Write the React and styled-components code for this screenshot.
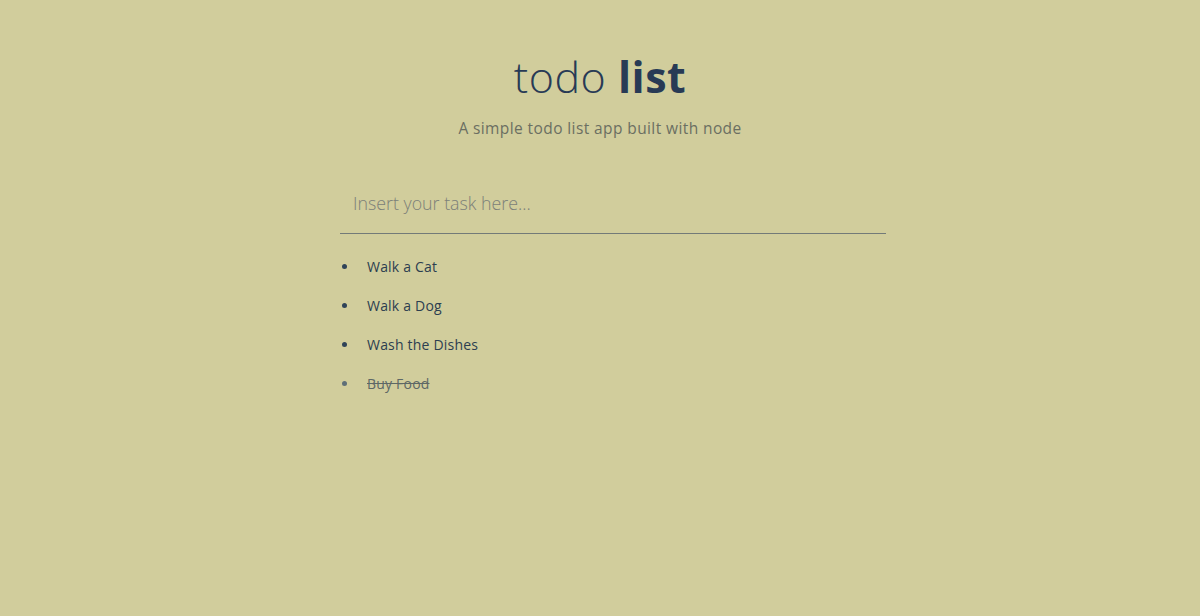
import React, { useState } from "react";
import styled, { createGlobalStyle } from "styled-components";

const GlobalStyle = createGlobalStyle`
  html, body {
    margin: 0;
    padding: 0;
    background: #d1cd9c;
  }
  body {
    font-family: "Open Sans", "Liberation Sans", sans-serif;
    color: #2c3e50;
  }
`;

const Page = styled.div`
  min-height: 616px;
  display: flex;
  flex-direction: column;
  align-items: center;
  padding-top: 51px;
  box-sizing: border-box;
`;

const Title = styled.h1`
  margin: 0;
  font-size: 43px;
  font-weight: 300;
  line-height: 52px;
  color: #283a55;
  letter-spacing: 0.5px;

  strong {
    font-weight: 700;
  }
`;

const Subtitle = styled.p`
  margin: 14px 0 0;
  font-size: 15.5px;
  font-weight: 400;
  color: #6b6f62;
  letter-spacing: 0.4px;
`;

const Container = styled.div`
  width: 520px;
  margin-top: 33px;
`;

const TaskInput = styled.input`
  display: block;
  width: 100%;
  height: 61px;
  padding: 0 13px;
  border: none;
  border-bottom: 1px solid #737a78;
  background: transparent;
  font-family: "Open Sans", sans-serif;
  font-size: 17.8px;
  font-weight: 300;
  color: #2c3e50;
  outline: none;

  &::placeholder {
    color: #7c8079;
  }
`;

const List = styled.ul`
  margin: 13px 0 0;
  padding: 0;
  list-style: none;
`;

const Item = styled.li`
  display: flex;
  align-items: center;
  font-size: 14px;
  letter-spacing: 0.2px;
  line-height: 39px;
  color: ${(p) => (p.$done ? "#5e6866" : "#2c3e50")};
  cursor: pointer;

  &::before {
    content: "";
    flex: none;
    width: 5px;
    height: 5px;
    margin: 0 20px 0 2px;
    border-radius: 50%;
    background: ${(p) => (p.$done ? "#5e6f78" : "#2f4358")};
  }
`;

const ItemText = styled.span`
  text-decoration: ${(p) => (p.$done ? "line-through" : "none")};
`;

const initialTasks = [
  { text: "Walk a Cat", done: false },
  { text: "Walk a Dog", done: false },
  { text: "Wash the Dishes", done: false },
  { text: "Buy Food", done: true },
];

export default function App() {
  const [tasks, setTasks] = useState(initialTasks);
  const [value, setValue] = useState("");

  const toggle = (i) =>
    setTasks(tasks.map((t, j) => (j === i ? { ...t, done: !t.done } : t)));

  const onKeyDown = (e) => {
    if (e.key === "Enter" && value.trim()) {
      setTasks([...tasks, { text: value.trim(), done: false }]);
      setValue("");
    }
  };

  return (
    <>
      <GlobalStyle />
      <Page>
        <Title>
          todo <strong>list</strong>
        </Title>
        <Subtitle>A simple todo list app built with node</Subtitle>
        <Container>
          <TaskInput
            placeholder="Insert your task here..."
            value={value}
            onChange={(e) => setValue(e.target.value)}
            onKeyDown={onKeyDown}
          />
          <List>
            {tasks.map((t, i) => (
              <Item key={i} $done={t.done} onClick={() => toggle(i)}>
                <ItemText $done={t.done}>{t.text}</ItemText>
              </Item>
            ))}
          </List>
        </Container>
      </Page>
    </>
  );
}
